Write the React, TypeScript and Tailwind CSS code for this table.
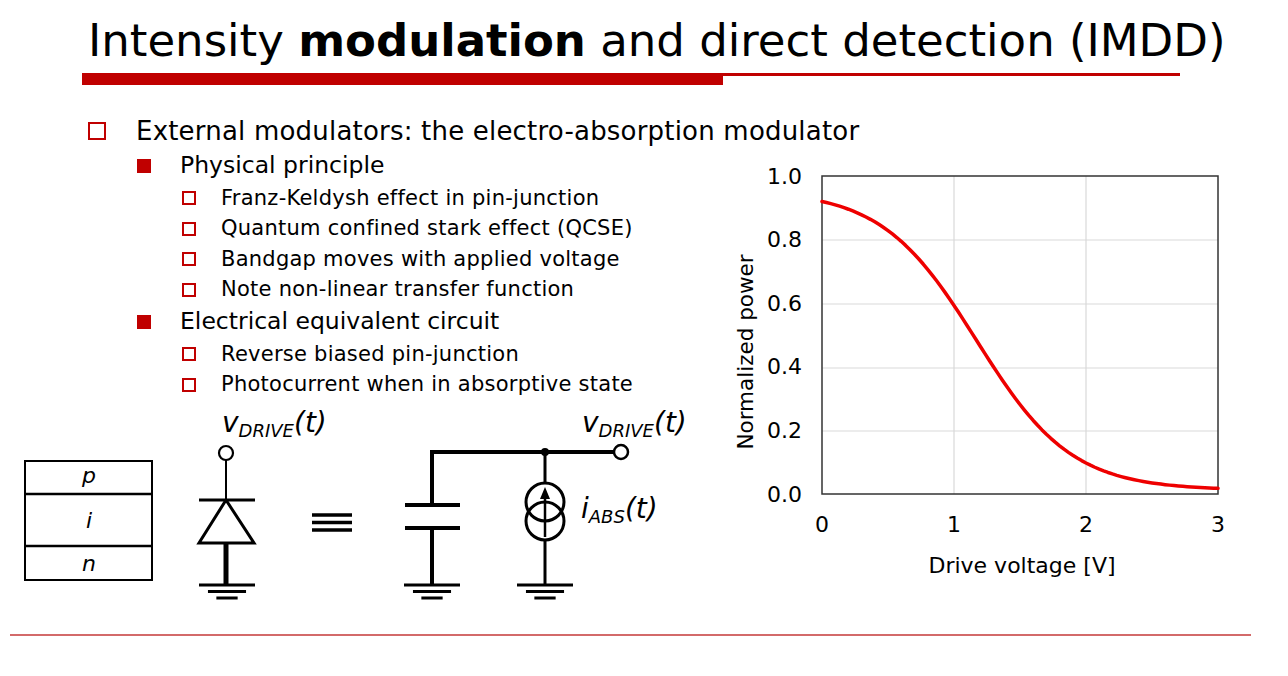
import React from "react";

function L1({ children }: { children: React.ReactNode }) {
  return (
    <div className="flex items-center h-[36px]">
      <span className="ml-[88px] mr-[30px] w-[18px] h-[18px] border-2 border-[#c00000] shrink-0" />
      <span className="text-[26px] leading-none tracking-[0.2px] text-black whitespace-nowrap">{children}</span>
    </div>
  );
}
function L2({ children }: { children: React.ReactNode }) {
  return (
    <div className="flex items-center h-[34px]">
      <span className="ml-[137px] mr-[29px] w-[14px] h-[14px] bg-[#c00000] shrink-0" />
      <span className="text-[23.5px] leading-none text-black whitespace-nowrap">{children}</span>
    </div>
  );
}
function L3({ children }: { children: React.ReactNode }) {
  return (
    <div className="flex items-center h-[30.5px]">
      <span className="ml-[182px] mr-[25px] w-[14px] h-[14px] border-2 border-[#c00000] shrink-0" />
      <span className="text-[21px] leading-none tracking-[0.25px] text-black whitespace-nowrap">{children}</span>
    </div>
  );
}

const X = (v: number) => 822 + v * 132;
const Y = (p: number) => 495 - p * 318;
const model = (v: number) => 0.012 + 0.9432 / (1 + Math.exp((v - 1.17) / 0.36));

function curvePath() {
  const n = 90;
  let d = "";
  for (let i = 0; i <= n; i++) {
    const v = (3 * i) / n;
    d += `${i === 0 ? "M" : " L"}${X(v).toFixed(2)},${Y(model(v)).toFixed(2)}`;
  }
  return d;
}

function Chart() {
  const font = { fontFamily: "'DejaVu Sans', Verdana, sans-serif" };
  return (
    <svg width="520" height="430" viewBox="720 160 520 430" className="block mt-[10px]" style={font}>
      {[241, 305, 369, 432].map((y) => (
        <line key={y} x1={822} x2={1218} y1={y} y2={y} stroke="#d9d9d9" strokeWidth={1.2} />
      ))}
      {[954, 1086].map((x) => (
        <line key={x} x1={x} x2={x} y1={177} y2={495} stroke="#d9d9d9" strokeWidth={1.2} />
      ))}
      <rect x={822} y={177} width={396} height={318} fill="none" stroke="#333" strokeWidth={1.5} />
      <path d={curvePath()} fill="none" stroke="#ee0000" strokeWidth={3.5} strokeLinecap="round" strokeLinejoin="round" />
      {["1.0", "0.8", "0.6", "0.4", "0.2", "0.0"].map((t, i) => (
        <text key={t} x={802} y={177 + i * 63.6} fontSize={22} textAnchor="end" dominantBaseline="central" fill="#000">
          {t}
        </text>
      ))}
      {["0", "1", "2", "3"].map((t, i) => (
        <text key={t} x={822 + i * 132} y={525} fontSize={22} textAnchor="middle" dominantBaseline="central" fill="#000">
          {t}
        </text>
      ))}
      <text x={1022} y={566} fontSize={22} textAnchor="middle" dominantBaseline="central" fill="#000">
        Drive voltage [V]
      </text>
      <text x={745} y={353} fontSize={21.5} textAnchor="middle" dominantBaseline="central" fill="#000" transform="rotate(-90 745 353)">
        Normalized power
      </text>
    </svg>
  );
}

function Ground({ x, y, w }: { x: number; y: number; w: number }) {
  return (
    <g stroke="#000" strokeWidth={3}>
      <line x1={x - w / 2} x2={x + w / 2} y1={y} y2={y} />
      <line x1={x - w * 0.34} x2={x + w * 0.34} y1={y + 6.5} y2={y + 6.5} />
      <line x1={x - w * 0.19} x2={x + w * 0.19} y1={y + 13} y2={y + 13} />
    </g>
  );
}

function VDrive({ x, y }: { x: number; y: number }) {
  return (
    <text x={x} y={y} fontStyle="italic" fill="#000">
      <tspan fontSize={28}>v</tspan>
      <tspan fontSize={18} dy={5}>DRIVE</tspan>
      <tspan fontSize={28} dy={-5}>(t)</tspan>
    </text>
  );
}

function Circuit() {
  const font = { fontFamily: "'DejaVu Sans', Verdana, sans-serif" };
  return (
    <svg width="720" height="210" viewBox="0 400 720 210" className="block" style={font}>
      {/* pin stack */}
      <rect x={25} y={461} width={127} height={119} fill="none" stroke="#000" strokeWidth={2} />
      <line x1={25} x2={152} y1={494} y2={494} stroke="#000" strokeWidth={2.5} />
      <line x1={25} x2={152} y1={546} y2={546} stroke="#000" strokeWidth={2.5} />
      <text x={89} y={483} fontSize={22} fontStyle="italic" textAnchor="middle">p</text>
      <text x={89} y={528} fontSize={22} fontStyle="italic" textAnchor="middle">i</text>
      <text x={89} y={571} fontSize={22} fontStyle="italic" textAnchor="middle">n</text>

      {/* diode */}
      <VDrive x={222} y={432} />
      <line x1={226} x2={226} y1={460} y2={500} stroke="#000" strokeWidth={2} />
      <circle cx={226} cy={453} r={7} fill="#fff" stroke="#000" strokeWidth={2.2} />
      <line x1={199} x2={255} y1={500} y2={500} stroke="#000" strokeWidth={3} />
      <polygon points="226,500 199,543 254,543" fill="none" stroke="#000" strokeWidth={3} strokeLinejoin="miter" />
      <line x1={226} x2={226} y1={543} y2={585} stroke="#000" strokeWidth={5} />
      <Ground x={227} y={585} w={56} />

      {/* equivalence */}
      <g stroke="#000" strokeWidth={3.5}>
        <line x1={312} x2={352} y1={515} y2={515} />
        <line x1={312} x2={352} y1={522.5} y2={522.5} />
        <line x1={312} x2={352} y1={530} y2={530} />
      </g>

      {/* capacitor + wire */}
      <path d="M432,505 V452 H614" fill="none" stroke="#000" strokeWidth={4} />
      <line x1={405} x2={460} y1={505} y2={505} stroke="#000" strokeWidth={4} />
      <line x1={405} x2={460} y1={528} y2={528} stroke="#000" strokeWidth={4} />
      <line x1={432} x2={432} y1={528} y2={585} stroke="#000" strokeWidth={4} />
      <Ground x={432} y={585} w={56} />

      {/* current source */}
      <circle cx={545} cy={452} r={4} fill="#000" />
      <circle cx={621} cy={452} r={7} fill="#fff" stroke="#000" strokeWidth={2.5} />
      <VDrive x={582} y={432} />
      <line x1={545} x2={545} y1={452} y2={483} stroke="#000" strokeWidth={3} />
      <circle cx={545} cy={502} r={19} fill="none" stroke="#000" strokeWidth={3} />
      <circle cx={545} cy={521} r={19} fill="none" stroke="#000" strokeWidth={3} />
      <line x1={545} x2={545} y1={540} y2={585} stroke="#000" strokeWidth={3} />
      <line x1={545} x2={545} y1={537} y2={496} stroke="#000" strokeWidth={2.5} />
      <polygon points="545,487 540,499 550,499" fill="#000" />
      <Ground x={545} y={585} w={56} />
      <text x={581} y={518} fontStyle="italic" fill="#000">
        <tspan fontSize={28}>i</tspan>
        <tspan fontSize={18} dy={5}>ABS</tspan>
        <tspan fontSize={28} dy={-5}>(t)</tspan>
      </text>
    </svg>
  );
}

export default function App() {
  return (
    <div className="w-[1288px] h-[676px] bg-white overflow-hidden" style={{ fontFamily: "'DejaVu Sans', Verdana, sans-serif" }}>
      <div
        className="pl-[88px] pt-[18px] text-[45px] leading-[45px] text-black whitespace-nowrap"
        style={{ fontFamily: "'DejaVu Sans', Tahoma, sans-serif" }}
      >
        Intensity <span className="font-bold">modulation</span> and direct detection (IMDD)
      </div>
      <div className="flex items-start ml-[82px] mt-[10px]">
        <div className="w-[641px] h-[12px] bg-[#c00000]" />
        <div className="w-[457px] h-[2.5px] bg-[#c00000]" />
      </div>
      <div className="mt-[28px]">
        <L1>External modulators: the electro-absorption modulator</L1>
        <div className="flex items-start">
          <div className="w-[720px]">
            <L2>Physical principle</L2>
            <L3>Franz-Keldysh effect in pin-junction</L3>
            <L3>Quantum confined stark effect (QCSE)</L3>
            <L3>Bandgap moves with applied voltage</L3>
            <L3>Note non-linear transfer function</L3>
            <L2>Electrical equivalent circuit</L2>
            <L3>Reverse biased pin-junction</L3>
            <L3>Photocurrent when in absorptive state</L3>
            <Circuit />
          </div>
          <Chart />
        </div>
      </div>
      <div className="ml-[10px] mt-[24px] w-[1241px] h-[2px] bg-[#d36a6a]" />
    </div>
  );
}
